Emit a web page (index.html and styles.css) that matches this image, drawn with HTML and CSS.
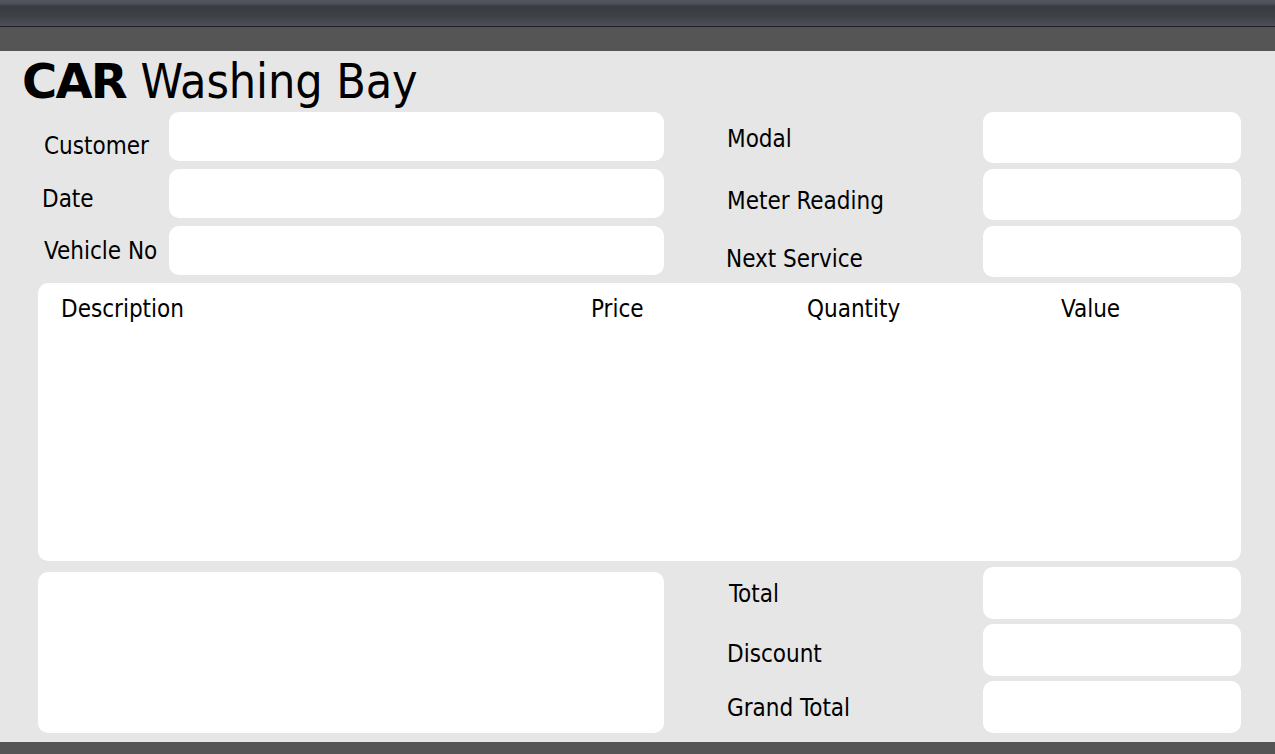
FILE: index.html
```html
<!DOCTYPE html>
<html lang="en">
<head>
<meta charset="utf-8">
<title>CAR Washing Bay</title>
<link rel="stylesheet" href="styles.css">
</head>
<body>
<header class="topbar">
  <div class="topbar-upper"></div>
  <div class="topbar-lower"></div>
</header>
<main class="page">
  <h1 class="title"><b>CAR</b> Washing Bay</h1>
  <section class="form-grid">
    <label class="lbl lbl-left lbl-customer">Customer</label>
    <div class="field field-wide"></div>
    <span class="spacer"></span>
    <label class="lbl lbl-modal">Modal</label>
    <div class="field"></div>

    <label class="lbl lbl-left lbl-date">Date</label>
    <div class="field field-wide"></div>
    <span class="spacer"></span>
    <label class="lbl lbl-meter">Meter Reading</label>
    <div class="field"></div>

    <label class="lbl lbl-left lbl-vehicle">Vehicle No</label>
    <div class="field field-wide"></div>
    <span class="spacer"></span>
    <label class="lbl lbl-next">Next Service</label>
    <div class="field"></div>
  </section>

  <section class="table-box">
    <div class="table-head">
      <span>Description</span>
      <span>Price</span>
      <span>Quantity</span>
      <span>Value</span>
    </div>
  </section>

  <section class="totals-grid">
    <div class="notes"></div>
    <span class="spacer"></span>
    <label class="lbl lbl-total">Total</label>
    <div class="field"></div>
    <span class="spacer"></span>
    <label class="lbl lbl-discount">Discount</label>
    <div class="field"></div>
    <span class="spacer"></span>
    <label class="lbl lbl-grand">Grand Total</label>
    <div class="field"></div>
  </section>
</main>
<footer class="bottombar"></footer>
</body>
</html>
```

FILE: styles.css
```css
* { box-sizing: border-box; }

html, body {
  margin: 0;
  padding: 0;
}

body {
  width: 1275px;
  height: 754px;
  overflow: hidden;
  background: #e6e6e6;
  font-family: "DejaVu Sans Condensed", "DejaVu Sans", sans-serif;
  color: #000;
  display: flex;
  flex-direction: column;
}

.topbar {
  flex: 0 0 auto;
  display: flex;
  flex-direction: column;
}

.topbar-upper {
  height: 27px;
  background: linear-gradient(#545760 0, #4c4f57 4px, #393b40 6px, #3c3f44 14px, #454850 22px, #4d5059 26px);
  border-bottom: 1px solid #1f2023;
}

.topbar-lower {
  height: 24px;
  background: #555555;
}

.page {
  flex: 1 1 auto;
  padding: 0 34px 0 38px;
  display: flex;
  flex-direction: column;
}

.title {
  margin: 6px 0 0 -16px;
  font-size: 48px;
  line-height: 48px;
  font-weight: normal;
  letter-spacing: -0.1px;
  height: 55px;
}

.title b {
  font-weight: bold;
  font-family: "DejaVu Sans", sans-serif;
  letter-spacing: -1.8px;
  margin-right: 1px;
}

.form-grid {
  display: grid;
  grid-template-columns: 131px 495px 63px 256px 258px;
  grid-auto-rows: 51px;
  row-gap: 6px;
}

.totals-grid {
  margin-top: 6px;
  display: grid;
  grid-template-columns: 131px 495px 63px 256px 258px;
  grid-template-rows: 52px 52px 52px;
  row-gap: 5px;
}

.lbl {
  font-size: 24px;
  line-height: 28px;
  white-space: nowrap;
  align-self: start;
}

.lbl-left { padding-left: 5px; }
.lbl-customer { padding-top: 20px; padding-left: 6px; }
.lbl-date { padding-top: 16px; padding-left: 4px; }
.lbl-vehicle { padding-top: 11px; padding-left: 6px; }
.lbl-modal { padding-top: 13px; }
.lbl-meter { padding-top: 18px; }
.lbl-next { padding-top: 19px; margin-left: -1px; }
.lbl-total { padding-top: 13px; padding-left: 2px; }
.lbl-discount { padding-top: 16px; }
.lbl-grand { padding-top: 13px; }

.field {
  background: #ffffff;
  border-radius: 10px;
}

.field-wide {
  height: 49px;
  align-self: start;
}

.spacer { display: block; }

.table-box {
  margin-top: 6px;
  height: 278px;
  background: #ffffff;
  border-radius: 10px;
}

.table-head {
  display: grid;
  grid-template-columns: 530px 216px 254px auto;
  padding: 12px 0 0 23px;
  font-size: 24px;
  line-height: 28px;
}

.notes {
  grid-column: 1 / span 2;
  grid-row: 1 / span 3;
  margin-top: 5px;
  background: #ffffff;
  border-radius: 10px;
}

.totals-grid .spacer:first-of-type { grid-column: 3; }

.bottombar {
  flex: 0 0 12px;
  height: 12px;
  background: #555555;
}
```
